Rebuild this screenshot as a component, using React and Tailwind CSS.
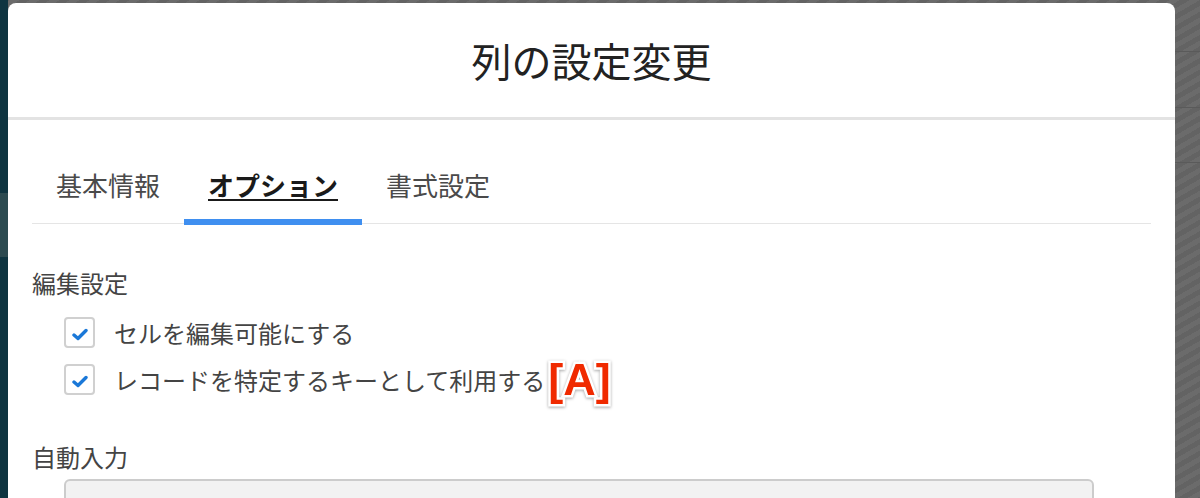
import { useState } from 'react';

const jp = "font-['Noto_Sans_CJK_JP','Noto_Sans',sans-serif]";

const tabs = ['基本情報', 'オプション', '書式設定'];

function CheckBox() {
  return (
    <div className="w-[31px] h-[31px] shrink-0 rounded-[4px] border-2 border-[#d0d0d0] bg-white flex items-center justify-center">
      <svg width="16" height="13" viewBox="0 0 16 13" className="mt-[4px]">
        <path d="M2 7 L6 10.5 L14 2.5" fill="none" stroke="#1a78d8" strokeWidth="3.4" strokeLinecap="round" strokeLinejoin="round" />
      </svg>
    </div>
  );
}

export default function App() {
  const [active, setActive] = useState(1);

  return (
    <div className={`w-[1200px] h-[498px] overflow-hidden flex bg-[repeating-linear-gradient(150deg,#636363_0px,#636363_5px,#6b6b6b_5px,#6b6b6b_10px)] ${jp}`}>
      {/* left edge of the app behind the dialog */}
      <div className="w-[8px] shrink-0 flex flex-col">
        <div className="h-[193px] shrink-0 bg-[#0e3440]" />
        <div className="h-[64px] shrink-0 bg-[#2c4a50]" />
        <div className="flex-1 bg-[#0e3440]" />
      </div>

      {/* dialog */}
      <div className="w-[1167px] shrink-0 mt-[3px] bg-white rounded-t-[8px] flex flex-col overflow-hidden">
        <div className="h-[117px] shrink-0 flex items-center justify-center border-b-[3px] border-[#e3e3e3]">
          <h1 className="text-[40px] leading-none text-[#222]">列の設定変更</h1>
        </div>

        <div className="shrink-0 px-[24px]">
          {/* tabs */}
          <div className="flex border-b border-[#e5e5e5]">
            {tabs.map((t, i) => (
              <button
                key={t}
                onClick={() => setActive(i)}
                className={`px-[24px] pt-[51px] pb-[18px] -mb-[2px] border-b-[6px] ${i === active ? 'border-[#3f8ff0]' : 'border-transparent'}`}
              >
                <span
                  className={`block text-[26px] leading-[28px] border-b-2 ${i === active ? 'font-bold text-[#1a1a1a] border-[#1a1a1a]' : 'text-[#4a4a4a] border-transparent'}`}
                >
                  {t}
                </span>
              </button>
            ))}
          </div>

          {/* edit settings */}
          <div className="mt-[43px] text-[24px] leading-[32px] text-[#444]">編集設定</div>
          <div className="mt-[18px] ml-[32px] flex flex-col gap-[16px]">
            <div className="flex items-center h-[31px]">
              <CheckBox />
              <span className="ml-[19px] text-[24px] leading-[32px] text-[#444]">セルを編集可能にする</span>
            </div>
            <div className="flex items-center h-[31px]">
              <CheckBox />
              <span className="ml-[19px] text-[24px] leading-[32px] text-[#444]">レコードを特定するキーとして利用する</span>
              <span className="ml-[3px] font-['Liberation_Sans',sans-serif] font-bold text-[45px] leading-[32px] text-[#f02a00] [-webkit-text-stroke:5px_#fff] [paint-order:stroke_fill] [filter:drop-shadow(0_1px_1.5px_rgba(0,0,0,0.35))]">
                [A]
              </span>
            </div>
          </div>

          {/* auto input */}
          <div className="mt-[46px] text-[24px] leading-[32px] text-[#444]">自動入力</div>
          <div className="mt-[6px] ml-[32px] w-[1030px] h-[44px] rounded-[6px] border-2 border-[#cccccc] bg-[#f2f2f2]" />
        </div>
      </div>

      {/* right edge, dimmed page */}
      <div className="flex-1 flex flex-col">
        <div className="h-[52px] shrink-0 border-b border-[#5a5a5a]" />
        <div className="h-[56px] shrink-0 border-b border-[#5a5a5a]" />
        <div className="h-[55px] shrink-0 border-b border-[#5a5a5a]" />
      </div>
    </div>
  );
}
